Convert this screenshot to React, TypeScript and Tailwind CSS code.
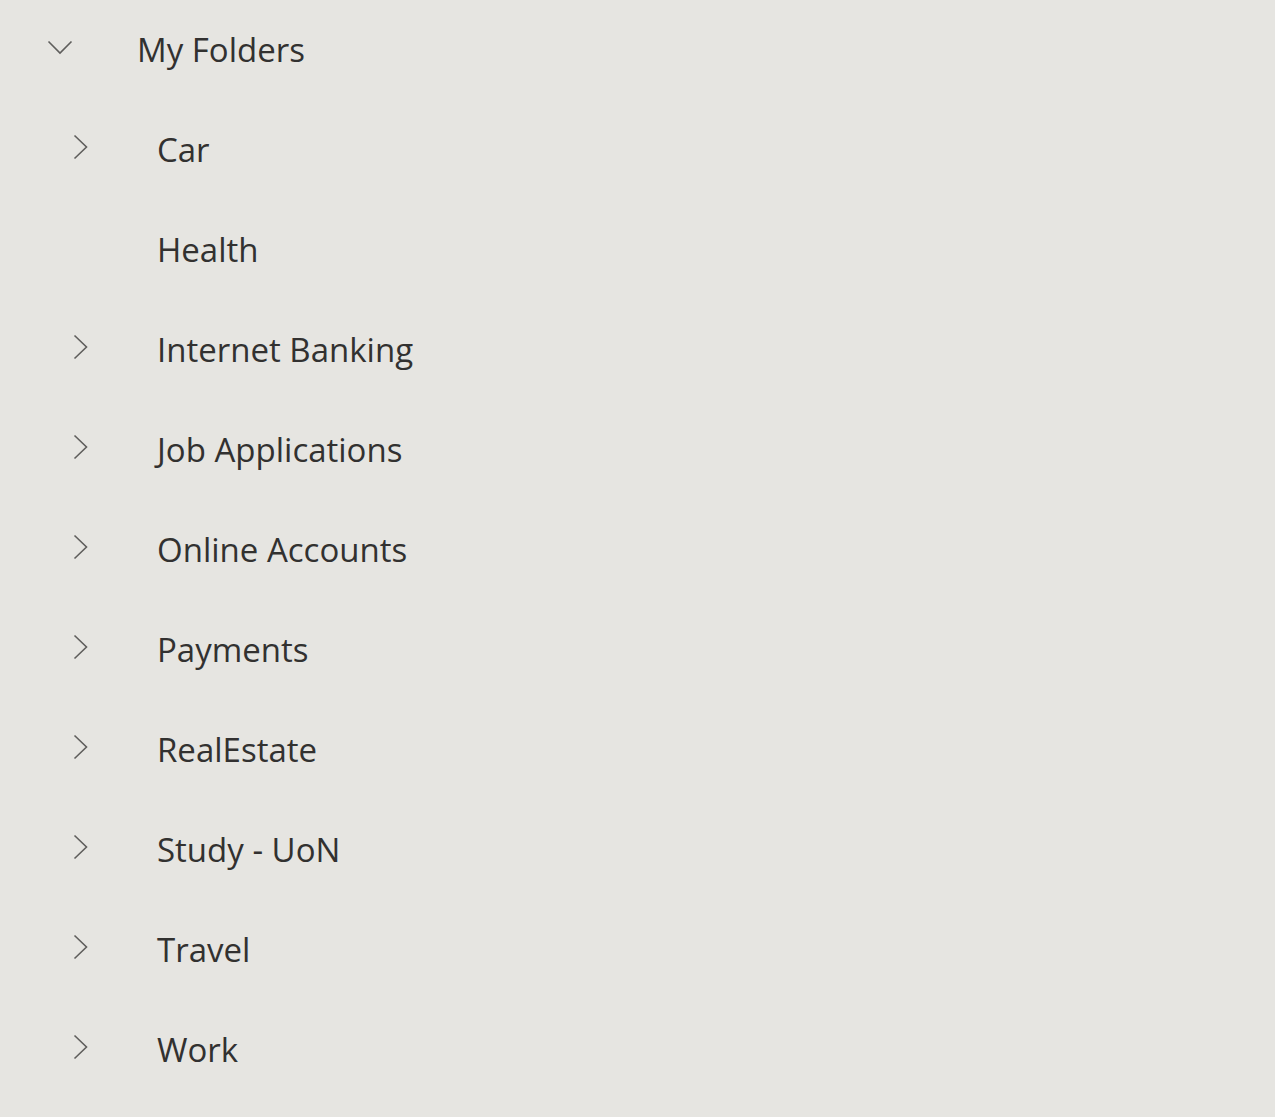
import React from "react";

const folders = [
  { name: "Car", sub: true },
  { name: "Health", sub: false },
  { name: "Internet Banking", sub: true },
  { name: "Job Applications", sub: true },
  { name: "Online Accounts", sub: true },
  { name: "Payments", sub: true },
  { name: "RealEstate", sub: true },
  { name: "Study - UoN", sub: true },
  { name: "Travel", sub: true },
  { name: "Work", sub: true },
];

const ChevronRight = () => (
  <svg width="16" height="26" viewBox="0 0 16 26" fill="none">
    <polyline points="1.5,1.5 13.5,13 1.5,24.5" stroke="#5f5e5c" strokeWidth="1.6" />
  </svg>
);

const ChevronDown = () => (
  <svg width="26" height="15" viewBox="0 0 26 15" fill="none">
    <polyline points="1.5,1.5 13,13 24.5,1.5" stroke="#5f5e5c" strokeWidth="1.6" />
  </svg>
);

export default function App() {
  return (
    <div
      className="w-[1275px] h-[1117px] bg-[#e6e5e1] text-[#323130] overflow-hidden"
      style={{ fontFamily: '"Open Sans", "Noto Sans", sans-serif' }}
    >
      <div className="flex items-center h-[100px]">
        <div className="w-[137px] pl-[47px] pb-[6px] flex items-center">
          <ChevronDown />
        </div>
        <span className="text-[33px] leading-none pb-[2px]">My Folders</span>
      </div>
      {folders.map((f) => (
        <div key={f.name} className="flex items-center h-[100px]">
          <div className="w-[157px] pl-[73px] pb-[6px] flex items-center">
            {f.sub && <ChevronRight />}
          </div>
          <span className="text-[33px] leading-none pb-[2px]">{f.name}</span>
        </div>
      ))}
    </div>
  );
}
